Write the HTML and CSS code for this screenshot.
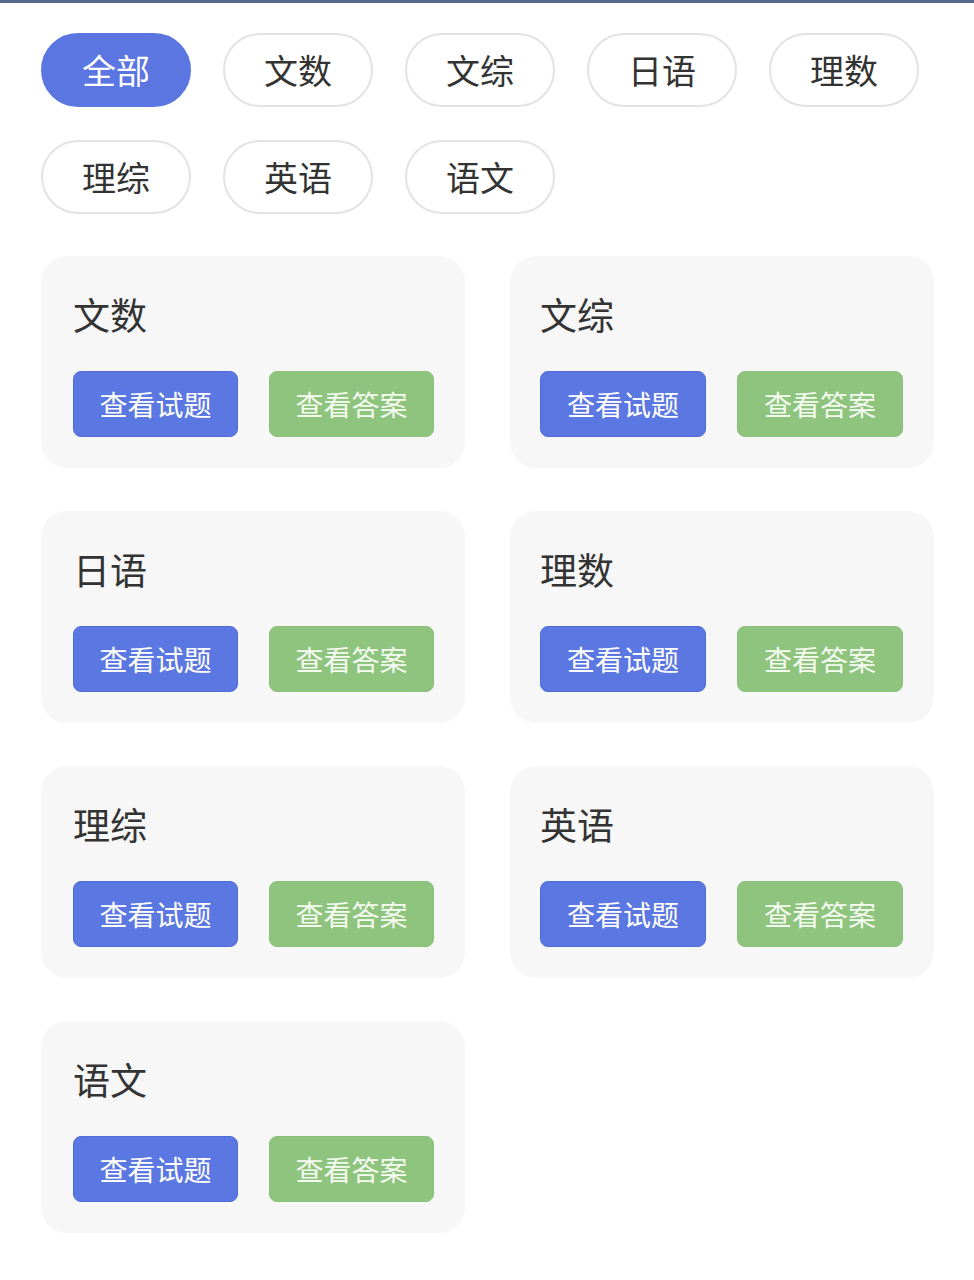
FILE: index.html
```html
<!DOCTYPE html>
<html lang="zh-CN">
<head>
<meta charset="utf-8">
<title>试题</title>
<link rel="stylesheet" href="styles.css">
</head>
<body>
<div class="topline"></div>
<main class="page">
  <nav class="chips">
    <span class="chip active">全部</span>
    <span class="chip">文数</span>
    <span class="chip">文综</span>
    <span class="chip">日语</span>
    <span class="chip">理数</span>
    <span class="chip">理综</span>
    <span class="chip">英语</span>
    <span class="chip">语文</span>
  </nav>
  <section class="cards">
    <div class="card"><h2 class="title">文数</h2><div class="actions"><span class="btn blue">查看试题</span><span class="btn green">查看答案</span></div></div>
    <div class="card"><h2 class="title">文综</h2><div class="actions"><span class="btn blue">查看试题</span><span class="btn green">查看答案</span></div></div>
    <div class="card"><h2 class="title">日语</h2><div class="actions"><span class="btn blue">查看试题</span><span class="btn green">查看答案</span></div></div>
    <div class="card"><h2 class="title">理数</h2><div class="actions"><span class="btn blue">查看试题</span><span class="btn green">查看答案</span></div></div>
    <div class="card"><h2 class="title">理综</h2><div class="actions"><span class="btn blue">查看试题</span><span class="btn green">查看答案</span></div></div>
    <div class="card"><h2 class="title">英语</h2><div class="actions"><span class="btn blue">查看试题</span><span class="btn green">查看答案</span></div></div>
    <div class="card"><h2 class="title">语文</h2><div class="actions"><span class="btn blue">查看试题</span><span class="btn green">查看答案</span></div></div>
  </section>
</main>
</body>
</html>
```
FILE: styles.css
```css
* { box-sizing: border-box; }
html, body { margin: 0; padding: 0; background: #ffffff; }
body {
  font-family: "Noto Sans CJK SC", "Noto Sans", sans-serif;
  color: #333333;
}
.topline {
  height: 3px;
  background: #56678f;
}
.page {
  padding: 30px 0 40px 41px;
}
.chips {
  display: flex;
  flex-wrap: wrap;
  column-gap: 32px;
  row-gap: 33px;
  width: 900px;
}
.chip {
  width: 150px;
  height: 74px;
  border: 2px solid #e3e3e3;
  border-radius: 37px;
  display: flex;
  align-items: center;
  justify-content: center;
  font-size: 34px;
  line-height: 1;
  color: #333333;
  background: #ffffff;
}
.chip.active {
  background: #5b76e0;
  border-color: #5b76e0;
  color: #ffffff;
}
.cards {
  margin-top: 42px;
  display: grid;
  grid-template-columns: 424px 424px;
  column-gap: 45px;
  row-gap: 43px;
}
.card {
  background: #f7f7f7;
  border-radius: 26px;
  padding: 40px 31px 31px 32px;
  height: 212px;
}
.card:nth-child(even) {
  padding-left: 30px;
}
.title {
  margin: 0;
  font-size: 37px;
  line-height: 37px;
  font-weight: 400;
  color: #333333;
}
.actions {
  margin-top: 38px;
  display: flex;
  gap: 31px;
}
.btn {
  width: 166px;
  height: 66px;
  border-radius: 8px;
  display: flex;
  align-items: center;
  justify-content: center;
  font-size: 28px;
  line-height: 1;
  color: #ffffff;
}
.btn.blue { background: #5b77e1; border: 1px solid #4f6bd6; }
.btn.green { background: #8fc47e; border: 1px solid #8ac079; color: #f4fbf0; }
```
